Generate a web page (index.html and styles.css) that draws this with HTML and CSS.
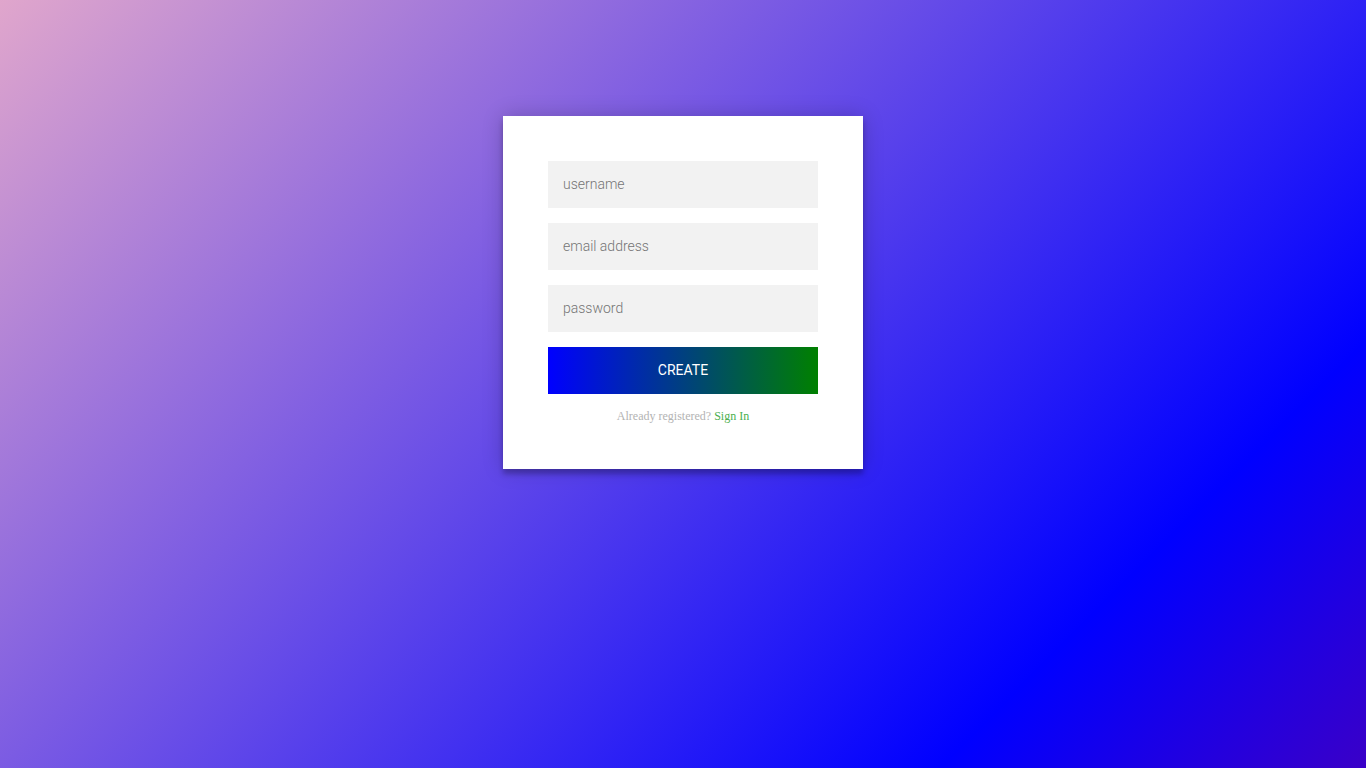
FILE: index.html
```html
<!DOCTYPE html>
<html lang="en">
<head>
<meta charset="utf-8">
<title>Register</title>
<link rel="stylesheet" href="styles.css">
</head>
<body>
<div class="login-page">
  <div class="form">
    <form class="register-form">
      <input type="text" placeholder="username">
      <input type="text" placeholder="email address">
      <input type="password" placeholder="password">
      <button type="button">create</button>
      <p class="message">Already registered? <a href="#">Sign In</a></p>
    </form>
  </div>
</div>
</body>
</html>
```

FILE: styles.css
```css
html, body {
  margin: 0;
  height: 100%;
}
body {
  background: linear-gradient(135deg, #e0a6cc 0%, #0000ff 80%, #3a00c8 100%);
  padding-top: 116px;
  box-sizing: border-box;
  font-family: "Roboto", "Liberation Sans", sans-serif;
}
.login-page {
  width: 360px;
  margin: 0 auto;
}
.form {
  background: #ffffff;
  padding: 45px;
  text-align: center;
  box-shadow: 0 0 20px 0 rgba(0, 0, 0, 0.2), 0 5px 5px 0 rgba(0, 0, 0, 0.24);
}
.register-form {
  display: flex;
  flex-direction: column;
  margin: 0;
}
.register-form input {
  font-family: "Roboto", "Liberation Sans", sans-serif;
  font-weight: 300;
  outline: 0;
  background: #f2f2f2;
  width: 100%;
  height: 47px;
  border: 0;
  margin: 0 0 15px;
  padding: 14px 15px 16px;
  box-sizing: border-box;
  font-size: 14px;
  color: #333;
}
.register-form input::placeholder {
  color: #757575;
}
.register-form button {
  font-family: "Roboto", "Liberation Sans", sans-serif;
  font-weight: 400;
  text-transform: uppercase;
  outline: 0;
  background: linear-gradient(to right, #0000ff, #008000);
  width: 100%;
  height: 47px;
  border: 0;
  padding: 0 0 2px;
  color: #ffffff;
  font-size: 14px;
  cursor: pointer;
}
.message {
  margin: 15px 0 0;
  color: #b3b3b3;
  font-size: 12px;
  font-family: "Liberation Serif", "Times New Roman", serif;
  line-height: 15px;
}
.message a {
  color: #4caf50;
  text-decoration: none;
}
```
